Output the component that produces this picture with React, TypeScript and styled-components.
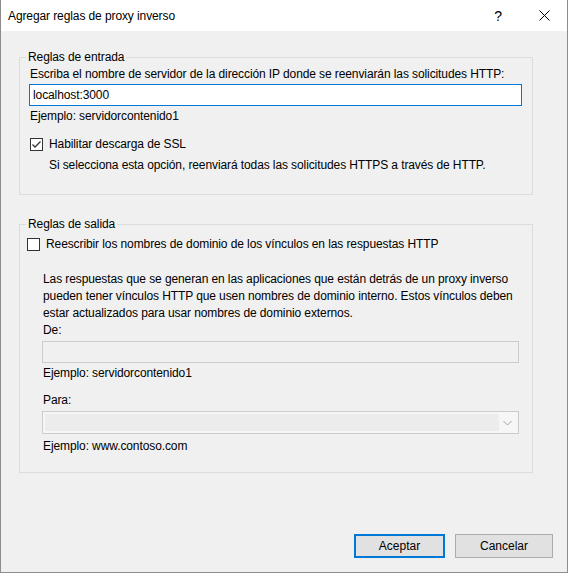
import React from "react";
import styled, { createGlobalStyle } from "styled-components";

const GlobalStyle = createGlobalStyle`
  html, body {
    margin: 0;
    padding: 0;
    background: #ffffff;
  }
  body {
    font-family: "Liberation Sans", Arial, sans-serif;
    font-size: 12px;
    letter-spacing: -0.1px;
    color: #000;
  }
`;

const Window = styled.div`
  width: 568px;
  height: 573px;
  box-sizing: border-box;
  border: 1px solid #8c8c8c;
  border-top: none;
  background: #f0f0f0;
  display: flex;
  flex-direction: column;
`;

const TitleBar = styled.div`
  height: 31px;
  background: #fff;
  display: flex;
  align-items: center;
`;

const Title = styled.div`
  flex: 1;
  padding-left: 7px;
`;

const CaptionButton = styled.div`
  width: 46px;
  height: 31px;
  display: flex;
  align-items: center;
  justify-content: center;
  font-size: 14px;
`;

const Body = styled.div`
  flex: 1;
  display: flex;
  flex-direction: column;
  gap: 21px;
  padding: 18px 34px 0 18px;
`;

const Group = styled.fieldset<{ $bottom: number }>`
  margin: 0;
  min-width: 0;
  padding: 0 10px ${(p) => p.$bottom}px;
  border: 1px solid #dcdcdc;
  display: flex;
  flex-direction: column;
`;

const Legend = styled.legend`
  padding: 0 2px;
  margin-left: -4px;
  line-height: 16px;
`;

const Text = styled.div<{ $top?: number; $indent?: number }>`
  line-height: 17px;
  margin-top: ${(p) => p.$top ?? 0}px;
  padding-left: ${(p) => p.$indent ?? 0}px;
`;

const TextBox = styled.div<{ $top?: number; $disabled?: boolean; $indent?: number; $right?: number }>`
  height: 22px;
  box-sizing: border-box;
  margin: ${(p) => p.$top ?? 0}px ${(p) => p.$right ?? 0}px 0 ${(p) => p.$indent ?? 0}px;
  border: 1px solid ${(p) => (p.$disabled ? "#cccccc" : "#0078d7")};
  background: ${(p) => (p.$disabled ? "#f0f0f0" : "#ffffff")};
  padding-left: 3px;
  line-height: 20px;
`;

const Select = styled.div<{ $top?: number; $indent?: number; $right?: number }>`
  height: 23px;
  box-sizing: border-box;
  margin: ${(p) => p.$top ?? 0}px ${(p) => p.$right ?? 0}px 0 ${(p) => p.$indent ?? 0}px;
  border: 1px solid #cccccc;
  background: #f6f6f6;
  display: flex;
  align-items: stretch;
  padding: 2px;
`;

const SelectField = styled.div`
  flex: 1;
  background: #ececec;
`;

const SelectArrow = styled.div`
  width: 17px;
  display: flex;
  align-items: center;
  justify-content: center;
`;

const CheckRow = styled.label<{ $top?: number; $shift?: number }>`
  display: flex;
  align-items: center;
  gap: 6px;
  line-height: 17px;
  margin-top: ${(p) => p.$top ?? 0}px;
  margin-left: ${(p) => p.$shift ?? 0}px;
`;

const CheckBox = styled.span`
  width: 13px;
  height: 13px;
  box-sizing: border-box;
  border: 1px solid #333333;
  background: #ffffff;
  display: flex;
  align-items: center;
  justify-content: center;
`;

const Footer = styled.div`
  display: flex;
  justify-content: flex-end;
  gap: 10px;
  padding: 0 14px 14px 0;
`;

const Button = styled.button<{ $primary?: boolean; $width: number }>`
  width: ${(p) => p.$width}px;
  height: 24px;
  box-sizing: border-box;
  font: inherit;
  color: #000;
  background: #e1e1e1;
  border: ${(p) => (p.$primary ? "2px solid #0078d7" : "1px solid #adadad")};
  padding: 0;
`;

const Check = ({ checked }: { checked?: boolean }) => (
  <CheckBox>
    {checked && (
      <svg width="11" height="11" viewBox="0 0 11 11">
        <path d="M1.5 5.5 L4 8 L9.5 2.5" fill="none" stroke="#333" strokeWidth="1.3" />
      </svg>
    )}
  </CheckBox>
);

function App() {
  return (
    <>
      <GlobalStyle />
      <Window>
        <TitleBar>
          <Title>Agregar reglas de proxy inverso</Title>
          <CaptionButton>?</CaptionButton>
          <CaptionButton>
            <svg width="11" height="11" viewBox="0 0 11 11">
              <path d="M0.5 0.5 L10.5 10.5 M10.5 0.5 L0.5 10.5" stroke="#000" strokeWidth="1" />
            </svg>
          </CaptionButton>
        </TitleBar>
        <Body>
          <Group $bottom={20}>
            <Legend>Reglas de entrada</Legend>
            <Text $top={1}>
              Escriba el nombre de servidor de la dirección IP donde se reenviarán las solicitudes HTTP:
            </Text>
            <TextBox $top={1} $indent={-1}>localhost:3000</TextBox>
            <Text $top={2}>Ejemplo: servidorcontenido1</Text>
            <CheckRow $top={11}>
              <Check checked />
              Habilitar descarga de SSL
            </CheckRow>
            <Text $top={4} $indent={19}>
              Si selecciona esta opción, reenviará todas las solicitudes HTTPS a través de HTTP.
            </Text>
          </Group>
          <Group $bottom={17}>
            <Legend>Reglas de salida</Legend>
            <CheckRow $top={4} $shift={-3}>
              <Check />
              Reescribir los nombres de dominio de los vínculos en las respuestas HTTP
            </CheckRow>
            <Text $top={18} $indent={13}>
              Las respuestas que se generan en las aplicaciones que están detrás de un proxy inverso
              pueden tener vínculos HTTP que usen nombres de dominio interno. Estos vínculos deben
              estar actualizados para usar nombres de dominio externos.
            </Text>
            <Text $indent={13}>De:</Text>
            <TextBox $top={2} $disabled $indent={12} $right={3} />
            <Text $top={2} $indent={13}>Ejemplo: servidorcontenido1</Text>
            <Text $top={10} $indent={13}>Para:</Text>
            <Select $top={2} $indent={12} $right={3}>
              <SelectField />
              <SelectArrow>
                <svg width="9" height="6" viewBox="0 0 9 6">
                  <path d="M0.5 1 L4.5 5 L8.5 1" fill="none" stroke="#a0a0a0" strokeWidth="1" />
                </svg>
              </SelectArrow>
            </Select>
            <Text $top={4} $indent={13}>Ejemplo: www.contoso.com</Text>
          </Group>
        </Body>
        <Footer>
          <Button $primary $width={91}>Aceptar</Button>
          <Button $width={98}>Cancelar</Button>
        </Footer>
      </Window>
    </>
  );
}

export default App;
